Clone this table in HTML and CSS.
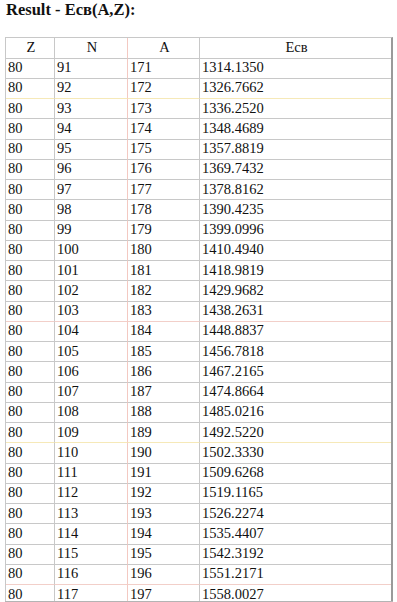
FILE: index.html
```html
<!DOCTYPE html>
<html>
<head>
<meta charset="utf-8">
<link rel="stylesheet" href="styles.css">
</head>
<body>
<h3 class="title">Result - Eсв(A,Z):</h3>
<div class="frame">
<table class="grid">
<colgroup><col class="wz"><col class="wn"><col class="wa"><col></colgroup>
<thead>
<tr><th>Z</th><th class="cn">N</th><th>A</th><th>Eсв</th></tr>
</thead>
<tbody>
<tr><td>80</td><td class="cn">91</td><td>171</td><td>1314.1350</td></tr>
<tr class="ly"><td>80</td><td class="cn">92</td><td>172</td><td>1326.7662</td></tr>
<tr><td>80</td><td class="cn">93</td><td>173</td><td>1336.2520</td></tr>
<tr><td>80</td><td class="cn">94</td><td>174</td><td>1348.4689</td></tr>
<tr><td>80</td><td class="cn">95</td><td>175</td><td>1357.8819</td></tr>
<tr><td>80</td><td class="cn">96</td><td>176</td><td>1369.7432</td></tr>
<tr><td>80</td><td class="cn">97</td><td>177</td><td>1378.8162</td></tr>
<tr><td>80</td><td class="cn">98</td><td>178</td><td>1390.4235</td></tr>
<tr><td>80</td><td class="cn">99</td><td>179</td><td>1399.0996</td></tr>
<tr><td>80</td><td class="cn">100</td><td>180</td><td>1410.4940</td></tr>
<tr><td>80</td><td class="cn">101</td><td>181</td><td>1418.9819</td></tr>
<tr><td>80</td><td class="cn">102</td><td>182</td><td>1429.9682</td></tr>
<tr class="lp"><td>80</td><td class="cn">103</td><td>183</td><td>1438.2631</td></tr>
<tr><td>80</td><td class="cn">104</td><td>184</td><td>1448.8837</td></tr>
<tr><td>80</td><td class="cn">105</td><td>185</td><td>1456.7818</td></tr>
<tr><td>80</td><td class="cn">106</td><td>186</td><td>1467.2165</td></tr>
<tr><td>80</td><td class="cn">107</td><td>187</td><td>1474.8664</td></tr>
<tr><td>80</td><td class="cn">108</td><td>188</td><td>1485.0216</td></tr>
<tr class="ly"><td>80</td><td class="cn">109</td><td>189</td><td>1492.5220</td></tr>
<tr><td>80</td><td class="cn">110</td><td>190</td><td>1502.3330</td></tr>
<tr><td>80</td><td class="cn">111</td><td>191</td><td>1509.6268</td></tr>
<tr><td>80</td><td class="cn">112</td><td>192</td><td>1519.1165</td></tr>
<tr><td>80</td><td class="cn">113</td><td>193</td><td>1526.2274</td></tr>
<tr><td>80</td><td class="cn">114</td><td>194</td><td>1535.4407</td></tr>
<tr><td>80</td><td class="cn">115</td><td>195</td><td>1542.3192</td></tr>
<tr class="lp"><td>80</td><td class="cn">116</td><td>196</td><td>1551.2171</td></tr>
<tr><td>80</td><td class="cn">117</td><td>197</td><td>1558.0027</td></tr>
</tbody>
</table>
</div>
</body>
</html>
```
FILE: styles.css
```css
html, body {
  margin: 0;
  padding: 0;
  background: #ffffff;
}
body {
  font-family: "Liberation Serif", "Times New Roman", serif;
  color: #000;
}
.title {
  margin: 0;
  padding: 0 0 0 6px;
  height: 37px;
  font-size: 16.5px;
  line-height: 20px;
  font-weight: bold;
  color: #111;
}
.frame {
  margin-left: 5px;
  width: 388px;
  height: 564px;
  overflow: hidden;
  border-bottom: 1px solid #b4b4b4;
}
.grid {
  border-collapse: separate;
  border-spacing: 0;
  width: 388px;
  table-layout: fixed;
  border-top: 1px solid #c8c8c8;
  border-left: 1px solid #c8c8c8;
  border-right: 2px solid #9a9a9a;
  font-size: 14.5px;
  color: #111;
}
.wz { width: 49px; }
.wn { width: 73px; }
.wa { width: 72px; }
.grid th, .grid td {
  box-sizing: border-box;
  border-right: 1px solid #c8c8c8;
  border-bottom: 1px solid #c8c8c8;
  height: 20.25px;
  padding: 0 0 2px 2px;
  line-height: 16px;
  vertical-align: middle;
  text-align: left;
  font-weight: normal;
  white-space: nowrap;
}
.grid th {
  text-align: center;
  height: 20.5px;
}
.grid th:last-child, .grid td:last-child {
  border-right: none;
}
.grid .cn { border-right-color: #f3c9c2; }
.grid tr.ly td { border-bottom-color: #f6e9b8; }
.grid tr.lp td { border-bottom-color: #f2cfc9; }
```
